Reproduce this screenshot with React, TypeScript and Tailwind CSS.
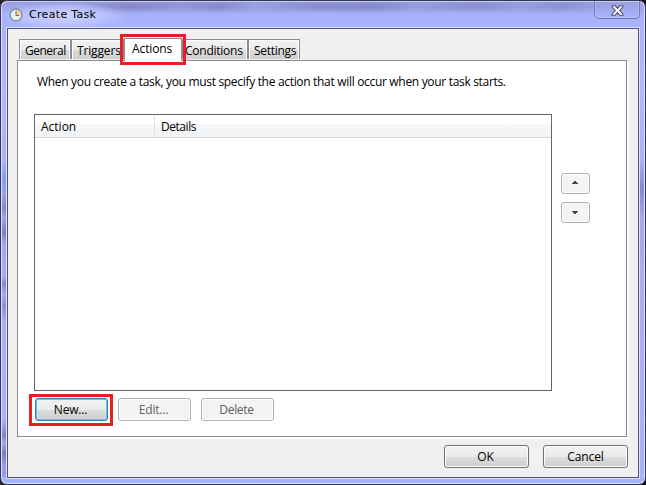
import type { ReactNode } from "react";

function Tab({ label, className, textClass }: { label: string; className: string; textClass: string }) {
  return (
    <div
      className={`h-[20px] shrink-0 whitespace-nowrap border border-b-0 border-[#898c95] bg-[linear-gradient(#f2f2f2_0,#ebebeb_50%,#dddddd_51%,#cfcfcf_100%)] shadow-[inset_1px_1px_0_#fcfcfc,inset_-1px_0_0_#fcfcfc] pl-[5px] pt-[3px] ${className}`}
    >
      <span className={textClass}>{label}</span>
    </div>
  );
}

function Button({ children, className }: { children: ReactNode; className: string }) {
  return (
    <button className={`flex shrink-0 items-center justify-center rounded-[3px] border ${className}`}>
      {children}
    </button>
  );
}

const raised =
  "h-[23px] w-[85px] border-[#707070] bg-[linear-gradient(#f2f2f2_0,#ebebeb_50%,#dddddd_51%,#cfcfcf_100%)] shadow-[inset_0_0_0_1px_#fcfcfc]";
const disabled = "border-[#adb2b5] bg-[#f4f4f4] text-[#606060] shadow-[inset_0_0_0_1px_#fcfcfc]";

function ClockIcon() {
  return (
    <svg className="mt-[7px] shrink-0" width="14" height="14" viewBox="0 0 14 14">
      <circle cx="7" cy="7" r="6" fill="#edf3f7" stroke="#858b96" strokeWidth="1.4" />
      <path d="M7 2v5h5a5 5 0 0 0-5-5" fill="#f5d58c" />
      <path d="M7 3v4.5h3.5" fill="none" stroke="#66727e" strokeWidth="1.1" />
      <path d="M7 11v1M2.5 7h1M3.5 10.5l.7-.7M10.5 10.5l-.7-.7M3.5 3.5l.7.7" stroke="#a6b2bd" strokeWidth=".7" />
    </svg>
  );
}

export default function App() {
  return (
    <div className="h-[485px] w-[646px] overflow-hidden bg-[linear-gradient(90deg,#30231f,#242845_50%,#111)] font-['Open_Sans','Noto_Sans',sans-serif] text-[12px] leading-[16px] text-black">
      <div className="relative flex h-[485px] w-[646px] flex-col overflow-hidden rounded-[7px] border border-[#343550] bg-[#a9b1fa] bg-[linear-gradient(180deg,#999ddb_0,#a8b2fc_16px,#b0b8ff_90px,#a6aaf0_230px,#acb0f8_360px,#a5b3fb_485px)] bg-origin-border px-[6px] shadow-[inset_0_0_0_1px_#dce1ff]">
        <div className="absolute left-[1px] top-[160px] h-[160px] w-[4px] bg-[linear-gradient(#a9b4ff,#7898f5_12%,#989de5_20%,#7f82c6_30%,#9da1ee_35%,#7476bd_45%,#a3a7f2_52%,#a6aaf3_72%,#7e80ca_77%,#a5a9f5_84%,#8688cf_91%,#a9acf6)] opacity-80" />
        <div className="absolute left-[1px] top-[420px] h-[56px] w-[4px] bg-[linear-gradient(#a8aaf5,#7678bd_26%,#a1a7ec_40%,#696db2_58%,#929be8_80%,#8f96df)] opacity-80" />
        <div className="absolute right-[1px] top-[160px] h-[60px] w-[4px] bg-[linear-gradient(#a9afff00,#7378c5_46%,#a9afff00)] opacity-70" />
        <div className="absolute left-[75px] top-[2px] h-[7px] w-[530px] bg-[linear-gradient(90deg,#6869a000,#6d6da3_10%,#898cc4_20%,#6f70a7_27%,#999ed8_34%,#7677b2_45%,#6d70aa_57%,#9297d0_64%,#7678b0_76%,#9499d6_84%,#7a7db8_92%,#6869a000)] opacity-60 blur-[2px]" />
        <div className="absolute left-0 top-[2px] h-[26px] w-[126px] bg-[radial-gradient(ellipse_at_center,#d0d5ff_0,#c8ceff90_45%,#bfc5ff00_72%)]" />
        <div className="absolute inset-x-[5px] top-0 h-[1px] bg-[#c6cbf2]" />
        <header className="relative flex h-[27px] shrink-0">
          <div className="ml-[2px] flex">
            <ClockIcon />
            <span className="ml-[6px] mt-[6px] whitespace-nowrap font-['DejaVu_Sans',sans-serif] text-[11px] tracking-[0.32px]">Create Task</span>
          </div>
          <button className="ml-auto mr-[-1px] flex h-[18px] w-[46px] justify-center rounded-b-[5px] border border-t-0 border-[#7579a9] pt-[4px] shadow-[inset_0_0_0_1px_#c7ceff80]">
            <svg width="13" height="11" viewBox="0 0 13 11">
              <path d="M1 .8h3.3l2.2 2.6L8.7.8H12v1L8.7 5.5 12 9.2v1H8.7L6.5 7.6l-2.2 2.6H1v-1l3.3-3.7L1 1.8Z" fill="#fff" stroke="#515270" strokeWidth="1.1" />
            </svg>
          </button>
        </header>
        <main className="relative flex h-[450px] w-[632px] shrink-0 flex-col border border-[#4d5080] bg-[#f0f0f0] pl-[9px] pt-[9px] shadow-[0_0_0_1px_#dce1ff]">
          <nav className="relative z-10 ml-[2px] flex h-[22px] items-end">
            <Tab label="General" className="mb-[1px] w-[52px]" textClass="tracking-[-0.5px]" />
            <Tab label="Triggers" className="mb-[1px] w-[53px]" textClass="tracking-[-0.15px]" />
            <div className="relative h-[23px] w-[58px] shrink-0 self-start border border-b-0 border-[#898c95] bg-white pl-[7px] pt-[2px] tracking-[-0.1px]">
              Actions
              <div className="absolute left-[-5px] top-[-5px] h-[31px] w-[66px] border-[3px] border-[#ed1c24]" />
            </div>
            <Tab label="Conditions" className="mb-[1px] w-[66px]" textClass="-ml-[3px] tracking-[-0.25px]" />
            <Tab label="Settings" className="mb-[1px] w-[52px]" textClass="tracking-[-0.3px]" />
          </nav>
          <section className="flex h-[377px] w-[610px] flex-col border border-[#898c95] bg-white pl-[16px] pt-[13px] shadow-[2px_2px_0_#fff]">
            <p className="ml-[3px] whitespace-nowrap tracking-[-0.315px]">When you create a task, you must specify the action that will occur when your task starts.</p>
            <div className="mt-[24px] flex">
              <div className="h-[277px] w-[518px] border border-[#646469] bg-white">
                <div className="flex h-[23px] border-b border-[#d5d5d5] bg-[linear-gradient(#fff_0,#fff_40%,#f7f8fa_41%,#f1f2f4_100%)] pt-[4px]">
                  <div className="-mt-[4px] w-[120px] border-r border-[#dfe1e4] pl-[6px] pt-[4px]">Action</div>
                  <div className="pl-[6px] tracking-[-0.45px]">Details</div>
                </div>
              </div>
              <div className="ml-[9px] mt-[59px] flex flex-col gap-[8px]">
                <Button className={`h-[21px] w-[29px] pb-[2px] ${disabled}`}>
                  <svg width="7" height="5" shapeRendering="crispEdges"><path d="M2 1h2v1h1v1h1v1H0V3h1V2h1Z" fill="#484848" /></svg>
                </Button>
                <Button className={`h-[21px] w-[29px] ${disabled}`}>
                  <svg width="7" height="5" shapeRendering="crispEdges"><path d="M0 1h6v1H5v1H4v1H2V3H1V2H0Z" fill="#484848" /></svg>
                </Button>
              </div>
            </div>
            <div className="relative ml-[1px] mt-[7px] flex gap-[10px]">
              <Button className="h-[23px] w-[73px] border-[#3c7fb1] bg-[linear-gradient(#f2f2f2_0,#ebebeb_50%,#dddddd_51%,#cfcfcf_100%)] pr-[2px] tracking-[-0.2px] shadow-[inset_0_0_0_1px_#48d0f5]">New...</Button>
              <Button className={`h-[23px] w-[73px] pr-[2px] tracking-[-0.2px] ${disabled}`}>Edit...</Button>
              <Button className={`h-[23px] w-[73px] pr-[2px] tracking-[-0.3px] ${disabled}`}>Delete</Button>
              <div className="absolute left-[-6px] top-[-4px] h-[32px] w-[84px] border-[3px] border-[#ed1c24]" />
            </div>
          </section>
          <footer className="mt-[8px] flex justify-end gap-[14px] pr-[10px]">
            <Button className={`pr-[2px] ${raised}`}>OK</Button>
            <Button className={`tracking-[-0.1px] ${raised}`}>Cancel</Button>
          </footer>
        </main>
      </div>
    </div>
  );
}
